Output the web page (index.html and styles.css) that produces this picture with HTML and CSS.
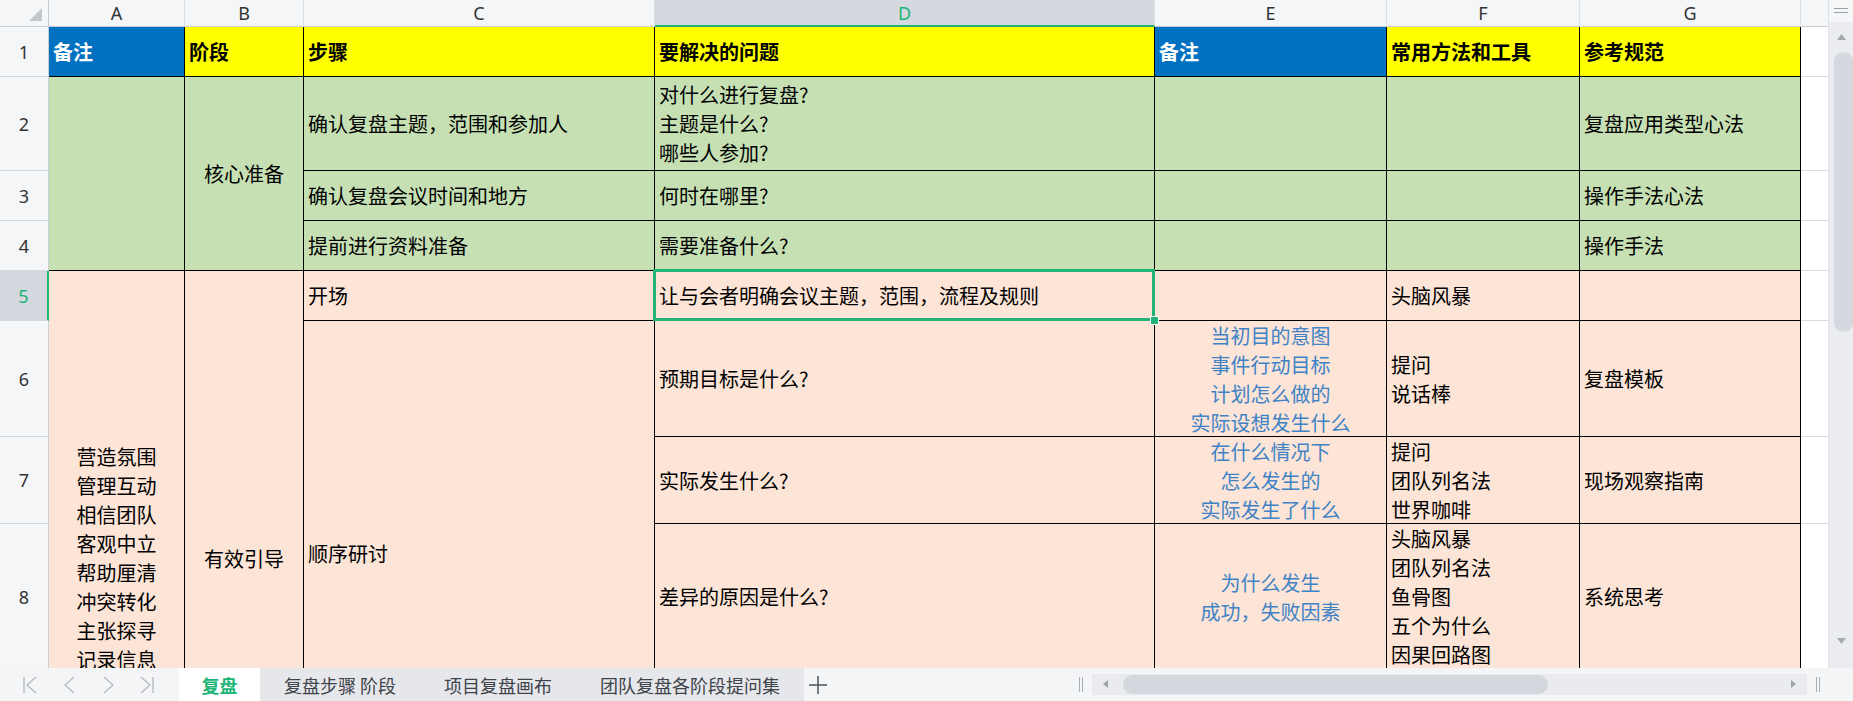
FILE: index.html
```html
<!DOCTYPE html>
<html lang="zh-CN">
<head>
<meta charset="utf-8">
<title>复盘</title>
<link rel="stylesheet" href="styles.css">
</head>
<body>
<div class="app">
  <div class="main">
    <div class="sheet">
      <!-- column header row -->
      <div class="corner"><svg width="48" height="26" viewBox="0 0 48 26"><polygon points="42,8 42,21 29,21" fill="#c3c7ce"/></svg></div>
      <div class="colh">A</div>
      <div class="colh">B</div>
      <div class="colh">C</div>
      <div class="colh colh-sel">D</div>
      <div class="colh">E</div>
      <div class="colh">F</div>
      <div class="colh">G</div>
      <div class="colh colh-last"></div>

      <!-- row 1 -->
      <div class="rowh">1</div>
      <div class="c hb"><span>备注</span></div>
      <div class="c hy"><span>阶段</span></div>
      <div class="c hy"><span>步骤</span></div>
      <div class="c hy"><span>要解决的问题</span></div>
      <div class="c hb"><span>备注</span></div>
      <div class="c hy"><span>常用方法和工具</span></div>
      <div class="c hy"><span>参考规范</span></div>
      <div class="hc"></div>

      <!-- row 2 -->
      <div class="rowh">2</div>
      <div class="c g span3"></div>
      <div class="c g span3 ctr"><span>核心准备</span></div>
      <div class="c g"><span>确认复盘主题，范围和参加人</span></div>
      <div class="c g"><span>对什么进行复盘?<br>主题是什么?<br>哪些人参加?</span></div>
      <div class="c g"></div>
      <div class="c g"></div>
      <div class="c g"><span>复盘应用类型心法</span></div>
      <div class="hc"></div>

      <!-- row 3 -->
      <div class="rowh">3</div>
      <div class="c g"><span>确认复盘会议时间和地方</span></div>
      <div class="c g"><span>何时在哪里?</span></div>
      <div class="c g"></div>
      <div class="c g"></div>
      <div class="c g"><span>操作手法心法</span></div>
      <div class="hc"></div>

      <!-- row 4 -->
      <div class="rowh">4</div>
      <div class="c g"><span>提前进行资料准备</span></div>
      <div class="c g"><span>需要准备什么?</span></div>
      <div class="c g"></div>
      <div class="c g"></div>
      <div class="c g"><span>操作手法</span></div>
      <div class="hc"></div>

      <!-- row 5 -->
      <div class="rowh rowh-sel">5</div>
      <div class="c p span4 ctr top a-notes"><span>营造氛围<br>管理互动<br>相信团队<br>客观中立<br>帮助厘清<br>冲突转化<br>主张探寻<br>记录信息</span></div>
      <div class="c p span4 ctr top b-stage"><span>有效引导</span></div>
      <div class="c p"><span>开场</span></div>
      <div class="c p cell-sel"><span>让与会者明确会议主题，范围，流程及规则</span></div>
      <div class="c p"></div>
      <div class="c p"><span>头脑风暴</span></div>
      <div class="c p"></div>
      <div class="hc"></div>

      <!-- row 6 -->
      <div class="rowh">6</div>
      <div class="c p span3 top c-step"><span>顺序研讨</span></div>
      <div class="c p"><span>预期目标是什么?</span></div>
      <div class="c p ctr note"><span>当初目的意图<br>事件行动目标<br>计划怎么做的<br>实际设想发生什么</span></div>
      <div class="c p"><span>提问<br>说话棒</span></div>
      <div class="c p"><span>复盘模板</span></div>
      <div class="hc"></div>

      <!-- row 7 -->
      <div class="rowh">7</div>
      <div class="c p"><span>实际发生什么?</span></div>
      <div class="c p ctr note"><span>在什么情况下<br>怎么发生的<br>实际发生了什么</span></div>
      <div class="c p"><span>提问<br>团队列名法<br>世界咖啡</span></div>
      <div class="c p"><span>现场观察指南</span></div>
      <div class="hc"></div>

      <!-- row 8 -->
      <div class="rowh">8</div>
      <div class="c p"><span>差异的原因是什么?</span></div>
      <div class="c p ctr note"><span>为什么发生<br>成功，失败因素</span></div>
      <div class="c p"><span>头脑风暴<br>团队列名法<br>鱼骨图<br>五个为什么<br>因果回路图</span></div>
      <div class="c p"><span>系统思考</span></div>
      <div class="hc"></div>
    </div>

    <div class="vscroll">
      <div class="vs-top"><svg width="14" height="6" viewBox="0 0 14 6"><line x1="0" y1="0.5" x2="14" y2="0.5" stroke="#9aa0a9" stroke-width="1"/><line x1="0" y1="4.5" x2="14" y2="4.5" stroke="#9aa0a9" stroke-width="1"/></svg></div>
      <div class="vs-up"><svg width="9" height="6" viewBox="0 0 9 6"><polygon points="4.5,0 9,6 0,6" fill="#a3a8b1"/></svg></div>
      <div class="vs-thumb"></div>
      <div class="vs-fill"></div>
      <div class="vs-down"><svg width="9" height="6" viewBox="0 0 9 6"><polygon points="0,0 9,0 4.5,6" fill="#a3a8b1"/></svg></div>
    </div>
  </div>

  <div class="tabbar">
    <div class="nav">
      <svg class="nav-first" width="14" height="18" viewBox="0 0 14 18"><line x1="1" y1="1" x2="1" y2="17" stroke="#b4b8bf" stroke-width="1.3"/><polyline points="13,1 4,9 13,17" fill="none" stroke="#b4b8bf" stroke-width="1.3"/></svg>
      <svg class="nav-prev" width="14" height="18" viewBox="0 0 14 18"><polyline points="11,1 2,9 11,17" fill="none" stroke="#b4b8bf" stroke-width="1.3"/></svg>
      <svg class="nav-next" width="14" height="18" viewBox="0 0 14 18"><polyline points="1,1 10,9 1,17" fill="none" stroke="#b4b8bf" stroke-width="1.3"/></svg>
      <svg class="nav-last" width="14" height="18" viewBox="0 0 14 18"><polyline points="1,1 10,9 1,17" fill="none" stroke="#b4b8bf" stroke-width="1.3"/><line x1="13" y1="1" x2="13" y2="17" stroke="#b4b8bf" stroke-width="1.3"/></svg>
    </div>
    <div class="tab tab-active">复盘</div>
    <div class="tabs">
      <div class="tab">复盘步骤 阶段</div>
      <div class="tab">项目复盘画布</div>
      <div class="tab">团队复盘各阶段提问集</div>
    </div>
    <div class="add"><svg width="18" height="18" viewBox="0 0 18 18"><line x1="9" y1="0" x2="9" y2="18" stroke="#4d525a" stroke-width="1.5"/><line x1="0" y1="9" x2="18" y2="9" stroke="#4d525a" stroke-width="1.5"/></svg></div>
    <div class="tb-spacer"></div>
    <div class="split"><svg width="5" height="15" viewBox="0 0 5 15"><line x1="0.5" y1="0" x2="0.5" y2="15" stroke="#a9aeb6"/><line x1="3.5" y1="0" x2="3.5" y2="15" stroke="#a9aeb6"/></svg></div>
    <div class="hscroll">
      <svg class="hs-left" width="5" height="8" viewBox="0 0 5 8"><polygon points="5,0 5,8 0,4" fill="#9ea3ac"/></svg>
      <div class="hs-thumb"></div>
      <div class="hs-fill"></div>
      <svg class="hs-right" width="5" height="8" viewBox="0 0 5 8"><polygon points="0,0 5,4 0,8" fill="#9ea3ac"/></svg>
    </div>
    <div class="split split-end"><svg width="5" height="15" viewBox="0 0 5 15"><line x1="0.5" y1="0" x2="0.5" y2="15" stroke="#a9aeb6"/><line x1="3.5" y1="0" x2="3.5" y2="15" stroke="#a9aeb6"/></svg></div>
  </div>
</div>
</body>
</html>
```

FILE: styles.css
```css
* { box-sizing: border-box; }

html, body {
  margin: 0;
  padding: 0;
}

body {
  width: 1853px;
  height: 701px;
  overflow: hidden;
  background: #ffffff;
  font-family: "Noto Sans CJK SC", "Noto Sans", sans-serif;
}

.app {
  display: flex;
  flex-direction: column;
  width: 1853px;
  height: 701px;
}

.main {
  display: flex;
  height: 668px;
}

/* ---------- sheet grid ---------- */
.sheet {
  width: 1828px;
  height: 668px;
  overflow: hidden;
  display: grid;
  grid-template-columns: 49px 136px 119px 351px 500px 232px 193px 221px 27px;
  grid-template-rows: 27px 50px 94px 50px 50px 50px 116px 87px 146px;
}

.corner {
  background: #f5f6f8;
  border-right: 1px solid #c9cdd4;
  border-bottom: 1px solid #c9cdd4;
}
.corner svg { display: block; }

.colh {
  background: #f5f6f8;
  border-right: 1px solid #dcdfe4;
  border-bottom: 1px solid #c9cdd4;
  display: flex;
  align-items: center;
  justify-content: center;
  font-family: "Noto Sans", "Liberation Sans", sans-serif;
  font-size: 18px;
  color: #333;
}
.colh-sel {
  background: #d5d8de;
  color: #20b576;
  border-bottom: 2px solid #20b576;
}
.colh-last { border-right: none; }

.rowh {
  background: #f5f6f8;
  border-right: 1px solid #c9cdd4;
  border-bottom: 1px solid #d6d9de;
  display: flex;
  align-items: center;
  justify-content: center;
  font-family: "Noto Sans", "Liberation Sans", sans-serif;
  font-size: 18px;
  color: #333;
}
.rowh-sel {
  background: #d5d8de;
  color: #20b576;
  border-right: 2px solid #20b576;
}

.c {
  border-right: 1px solid #000;
  border-bottom: 1px solid #000;
  padding: 0 4px;
  display: flex;
  align-items: center;
  font-size: 20px;
  line-height: 29px;
  color: #000;
  white-space: nowrap;
  overflow: visible;
}

.hb { background: #0070c0; color: #fff; font-weight: 700; }
.hy { background: #ffff00; color: #000; font-weight: 700; }
.g  { background: #c6e0b4; }
.p  { background: #fce4d6; }

.ctr { justify-content: center; text-align: center; }
.top { align-items: flex-start; }
.note { color: #3f82c6; }

.span3 { grid-row: span 3; }
.span4 { grid-row: span 4; }

.a-notes { padding-top: 171px; }
.b-stage { padding-top: 273px; }
.c-step { padding-top: 218px; }

.hc {
  background: #fff;
  border-bottom: 1px solid #d8dbe0;
}

/* active cell selection */
.cell-sel { position: relative; }
.cell-sel::after {
  content: "";
  position: absolute;
  top: -2px;
  left: -2px;
  right: -1px;
  bottom: -1px;
  border: 3px solid #20b576;
  z-index: 2;
}
.cell-sel::before {
  content: "";
  position: absolute;
  right: -5px;
  bottom: -5px;
  width: 7px;
  height: 7px;
  background: #20b576;
  border: 1px solid #fff;
  z-index: 3;
}

/* ---------- vertical scrollbar ---------- */
.vscroll {
  width: 25px;
  height: 668px;
  background: #eaecf0;
  border-left: 1px solid #dde0e5;
  display: flex;
  flex-direction: column;
  align-items: center;
}
.vs-top {
  width: 100%;
  height: 22px;
  background: #f5f6f8;
  display: flex;
  align-items: center;
  justify-content: center;
}
.vs-top svg { display: block; }
.vs-up {
  height: 30px;
  display: flex;
  align-items: center;
  justify-content: center;
}
.vs-up svg, .vs-down svg { display: block; }
.vs-thumb {
  width: 19px;
  height: 280px;
  margin-left: 5px;
  background: #d5d8de;
  border-radius: 9px;
}
.vs-fill { flex: 1; }
.vs-down {
  height: 30px;
  display: flex;
  align-items: flex-start;
  justify-content: center;
}

/* ---------- tab bar ---------- */
.tabbar {
  height: 33px;
  display: flex;
  align-items: stretch;
  background: #f4f5f7;
  font-family: "Noto Sans CJK SC", "Noto Sans", sans-serif;
  font-size: 18px;
  color: #3f434a;
}

.nav {
  width: 179px;
  display: flex;
  align-items: center;
  padding-left: 23px;
}
.nav svg { display: block; flex: none; }
.nav-prev { margin-left: 26px; }
.nav-next { margin-left: 26px; }
.nav-last { margin-left: 23px; }

.tab {
  display: flex;
  align-items: center;
  padding: 0 24px;
  white-space: nowrap;
}
.tab-active {
  background: #ffffff;
  color: #20b576;
  font-weight: 700;
  padding: 0 22.5px;
}
.tabs {
  display: flex;
  background: #e5e7eb;
}

.add {
  display: flex;
  align-items: center;
  padding-left: 5px;
  width: 40px;
}
.add svg { display: block; }

.tb-spacer { flex: 1; }

.split {
  display: flex;
  align-items: center;
  width: 13px;
}
.split svg { display: block; }
.split-end {
  width: 46px;
  padding-left: 9px;
}

.hscroll {
  width: 715px;
  height: 21px;
  align-self: center;
  margin-top: -1px;
  background: #e9ebef;
  display: flex;
  align-items: center;
  padding: 0 11px;
}
.hscroll svg { display: block; flex: none; }
.hs-thumb {
  width: 425px;
  height: 19px;
  margin-left: 15px;
  background: #d4d7dd;
  border-radius: 10px;
}
.hs-fill { flex: 1; }
```
